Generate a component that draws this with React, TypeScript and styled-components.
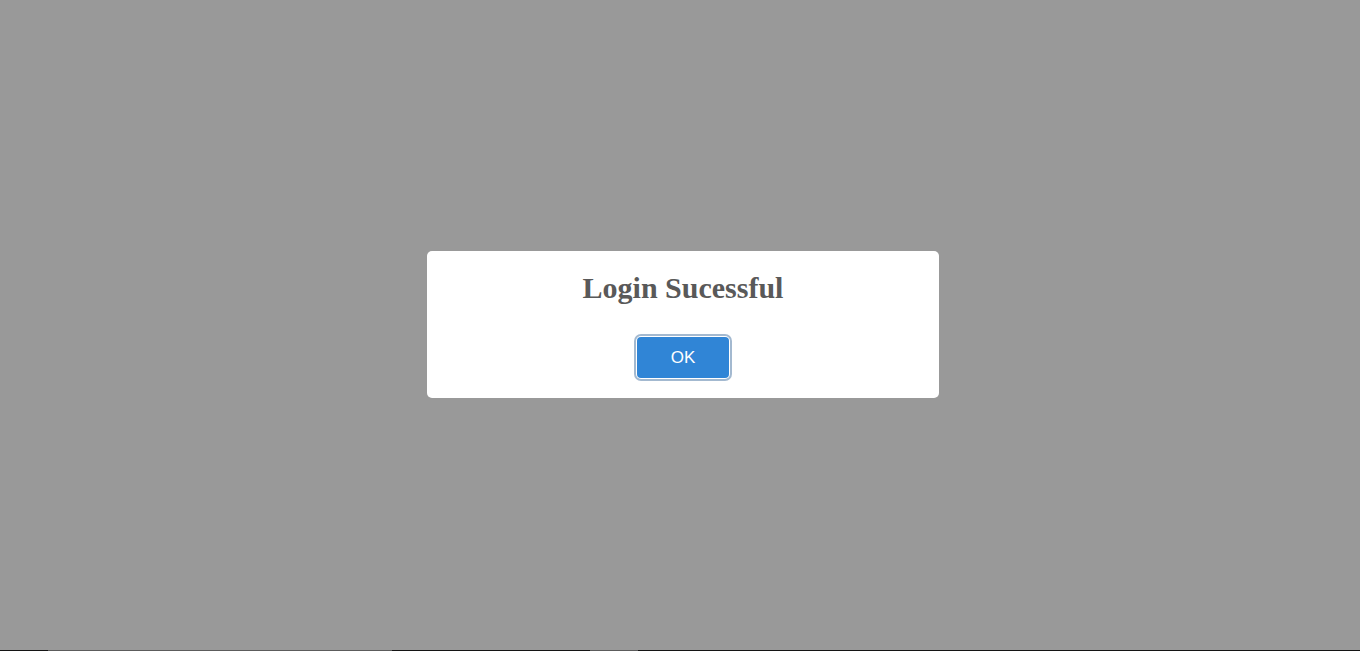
import React from "react";
import styled, { createGlobalStyle } from "styled-components";

const Global = createGlobalStyle`
  html, body { margin: 0; padding: 0; height: 100%; overflow: hidden; background: #999999; }
  #root { height: 100%; }
`;

const Page = styled.div`
  display: flex;
  flex-direction: column;
  height: 651px;
  width: 1360px;
`;

const Overlay = styled.div`
  flex: 1;
  display: flex;
  align-items: center;
  justify-content: center;
  padding-left: 6px;
  padding-bottom: 1px;
  background: #999999;
`;

const Modal = styled.div`
  width: 512px;
  height: 147px;
  box-sizing: border-box;
  background: #ffffff;
  border-radius: 5px;
  display: flex;
  flex-direction: column;
  align-items: center;
  padding-top: 19px;
`;

const Title = styled.h2`
  margin: 0;
  font-family: "Liberation Serif", "Times New Roman", serif;
  font-weight: 700;
  font-size: 30px;
  line-height: 36px;
  color: #595959;
`;

const Footer = styled.div`
  margin-top: 31px;
  display: flex;
  justify-content: center;
`;

const Button = styled.button`
  width: 92px;
  height: 41px;
  border: 0;
  border-radius: 4px;
  background: #3085d6;
  color: #ffffff;
  font-family: "Liberation Sans", Arial, sans-serif;
  font-size: 17px;
  cursor: pointer;
  box-shadow: 0 0 0 1px #ffffff, 0 0 0 3px rgba(50, 100, 150, 0.45);
  outline: none;
  padding: 0;
`;

const Strip = styled.div`
  display: flex;
  height: 1px;
`;

const Seg = styled.div<{ $w: number; $dark?: boolean }>`
  width: ${(p) => p.$w}px;
  flex: ${(p) => (p.$w ? "none" : "1")};
  background: ${(p) => (p.$dark ? "#141414" : "#5c5c5c")};
`;

export default function App() {
  return (
    <>
      <Global />
      <Page>
        <Overlay>
          <Modal>
            <Title>Login Sucessful</Title>
            <Footer>
              <Button>OK</Button>
            </Footer>
          </Modal>
        </Overlay>
        <Strip>
          <Seg $w={48} $dark />
          <Seg $w={344} />
          <Seg $w={198} $dark />
          <Seg $w={48} />
          <Seg $w={0} $dark />
        </Strip>
      </Page>
    </>
  );
}
